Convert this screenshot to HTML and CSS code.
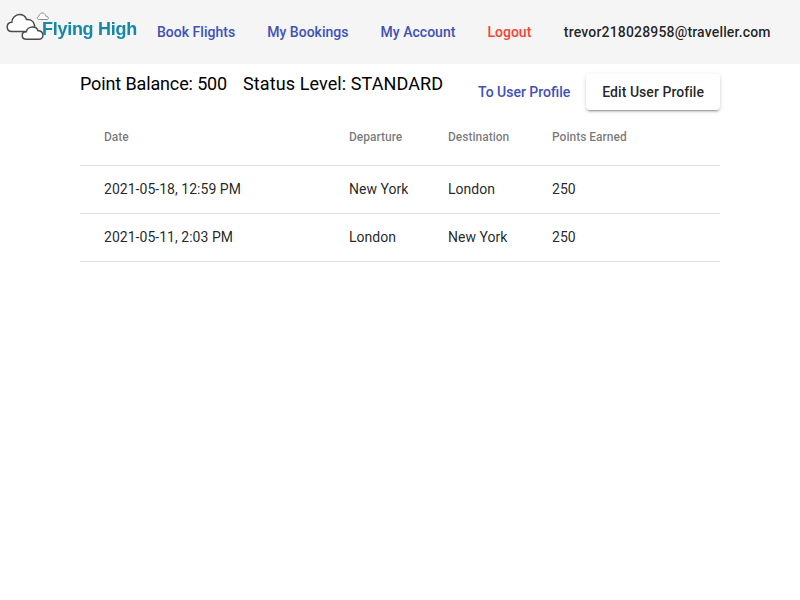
FILE: index.html
```html
<!DOCTYPE html>
<html lang="en">
<head>
<meta charset="utf-8">
<title>Flying High</title>
<link rel="stylesheet" href="styles.css">
</head>
<body>
<header class="toolbar">
  <div class="logo">
    <svg class="clouds" width="46" height="30" viewBox="0 0 46 30">
      <path d="M6 20.500C3 20.500 1.200 18.500 1.200 16C1.200 13.500 3 11.500 5.800 11.300C6 7 9.500 3.500 13.500 3.500C16.800 3.500 19.500 5.500 20.500 8.500C24 8 27.500 10 28.500 14C29.200 17.500 27 20.500 24 20.500Z" fill="#fff" stroke="#4a4a4a" stroke-width="1.500"/>
      <path d="M20.500 28.300C18 28.300 16.200 26.800 16.200 24.500C16.200 22.300 18 20.800 20.300 20.800C20.800 18 23.500 16 26.500 16C29.500 16 31.500 17.800 32 19.800C34.800 19.500 37 21.500 37 24C37 26.500 35 28.300 32.500 28.300Z" fill="#fff" stroke="#4a4a4a" stroke-width="1.500"/>
      <path d="M33.200 8.500C31 8.500 30.500 5.800 32.800 5.200C33.200 2.800 35.500 1.200 37.500 2.200C38.800 2.800 39.500 4 39.800 5.200C42.500 5 43.500 8.500 41 8.500Z" fill="#fff" stroke="#8c8c8c" stroke-width="1"/>
    </svg>
    <span class="logo-text">Flying High</span>
  </div>
  <nav class="nav">
    <a class="nav-link">Book Flights</a>
    <a class="nav-link">My Bookings</a>
    <a class="nav-link">My Account</a>
    <a class="nav-link logout">Logout</a>
    <span class="nav-link email">trevor218028958@traveller.com</span>
  </nav>
</header>
<main class="content">
  <div class="summary">
    <div class="balances">
      <span class="balance">Point Balance: 500</span>
      <span class="status">Status Level: STANDARD</span>
    </div>
    <div class="actions">
      <a class="btn link">To User Profile</a>
      <a class="btn raised">Edit User Profile</a>
    </div>
  </div>
  <table class="table">
    <thead>
      <tr><th class="c1">Date</th><th class="c2">Departure</th><th class="c3">Destination</th><th>Points Earned</th></tr>
    </thead>
    <tbody>
      <tr><td>2021-05-18, 12:59 PM</td><td>New York</td><td>London</td><td>250</td></tr>
      <tr><td>2021-05-11, 2:03 PM</td><td>London</td><td>New York</td><td>250</td></tr>
    </tbody>
  </table>
</main>
</body>
</html>
```
FILE: styles.css
```css
* { box-sizing: border-box; }
html, body { margin: 0; padding: 0; background: #fff; }
body { font-family: Roboto, "Liberation Sans", sans-serif; color: rgba(0,0,0,.87); }
.toolbar { height: 64px; background: #f5f5f5; display: flex; align-items: center; }
.logo { width: 141px; height: 64px; display: flex; position: relative; filter: blur(.3px); }
.clouds { position: absolute; left: 6px; top: 11px; }
.logo-text { position: absolute; left: 42px; top: 18px; font: bold 18px/22px "Liberation Sans", Arial, sans-serif; color: #1488a8; letter-spacing: -0.28px; white-space: nowrap; }
.nav { display: flex; align-items: center; }
.nav-link { padding: 0 16px; font-size: 14px; font-weight: 500; line-height: 36px; color: #3f51b5; white-space: nowrap; letter-spacing: .02px; }
.logout { color: #f44336; }
.email { color: rgba(0,0,0,.87); letter-spacing: .17px; margin-left: .5px; }
.content { width: 640px; margin: 0 auto; }
.summary { display: flex; justify-content: space-between; height: 46px; }
.balances { display: flex; gap: 16px; font-size: 18px; line-height: 24px; padding-top: 8px; color: #000; }
.balance { letter-spacing: -.13px; }
.status { letter-spacing: .09px; }
.actions { display: flex; align-items: flex-end; }
.btn { padding: 0 16px; font-size: 14px; font-weight: 500; line-height: 36px; border-radius: 4px; white-space: nowrap; }
.link { color: #3f51b5; }
.raised { background: #fff; letter-spacing: .05px; box-shadow: 0 3px 1px -2px rgba(0,0,0,.2), 0 2px 2px 0 rgba(0,0,0,.14), 0 1px 5px 0 rgba(0,0,0,.12); }
.table { width: 100%; border-collapse: collapse; }
.table th { height: 55px; padding: 0; text-align: left; font-size: 12px; font-weight: 500; color: rgba(0,0,0,.54); border-bottom: 1px solid #e0e0e0; }
.table td { height: 48px; padding: 0; font-size: 14px; border-bottom: 1px solid #e0e0e0; letter-spacing: .03px; }
.table tr > :first-child { padding-left: 24px; }
.c1 { width: 269px; }
.c2 { width: 99px; }
.c3 { width: 104px; }
```
